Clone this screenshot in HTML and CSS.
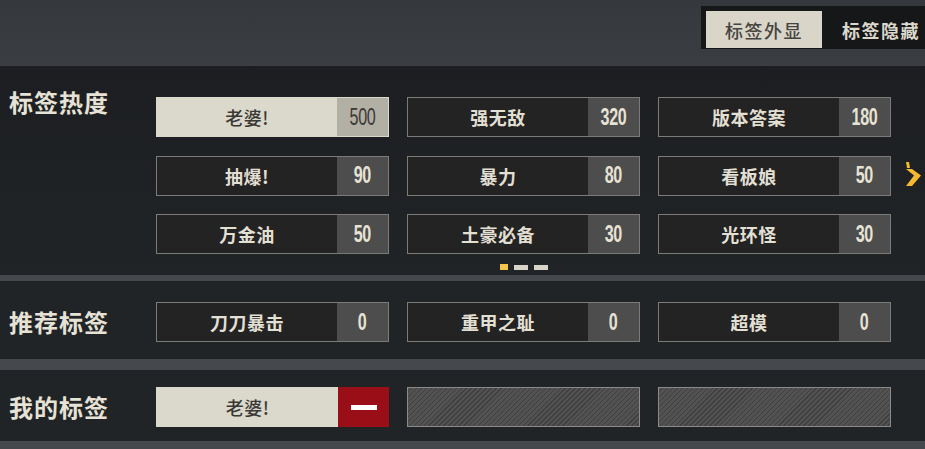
FILE: index.html
```html
<!DOCTYPE html>
<html lang="zh">
<head>
<meta charset="utf-8">
<link rel="stylesheet" href="styles.css">
</head>
<body>
<div class="page">
  <div class="top">
    <div class="toggle">
      <div class="tab tab-on">标签外显</div>
      <div class="tab tab-off">标签隐藏</div>
    </div>
  </div>

  <section class="sec sec-hot">
    <div class="label">标签热度</div>
    <div class="gridwrap">
      <div class="grid">
        <div class="card card-on"><span class="name">老婆!</span><span class="num"><i>500</i></span></div>
        <div class="card"><span class="name">强无敌</span><span class="num"><i>320</i></span></div>
        <div class="card"><span class="name">版本答案</span><span class="num"><i>180</i></span></div>
        <div class="card"><span class="name">抽爆!</span><span class="num"><i>90</i></span></div>
        <div class="card"><span class="name">暴力</span><span class="num"><i>80</i></span></div>
        <div class="card"><span class="name">看板娘</span><span class="num"><i>50</i></span></div>
        <div class="card"><span class="name">万金油</span><span class="num"><i>50</i></span></div>
        <div class="card"><span class="name">土豪必备</span><span class="num"><i>30</i></span></div>
        <div class="card"><span class="name">光环怪</span><span class="num"><i>30</i></span></div>
      </div>
      <div class="dots"><span class="dot dot-on"></span><span class="dot"></span><span class="dot"></span></div>
    </div>
    <div class="arrow">
      <svg width="17" height="27" viewBox="0 0 17 27"><polygon points="1,1 4,1 5,7 2,7" fill="#f5b830"/><polygon points="1,8 7,8 16,14.5 7,25 1,25 9,14.5" fill="#f5b830"/></svg>
    </div>
  </section>
  <div class="band band-a"></div>

  <section class="sec sec-rec">
    <div class="label">推荐标签</div>
    <div class="grid">
      <div class="card"><span class="name">刀刀暴击</span><span class="num"><i>0</i></span></div>
      <div class="card"><span class="name">重甲之耻</span><span class="num"><i>0</i></span></div>
      <div class="card"><span class="name">超模</span><span class="num"><i>0</i></span></div>
    </div>
  </section>
  <div class="band band-b"></div>

  <section class="sec sec-mine">
    <div class="label">我的标签</div>
    <div class="grid">
      <div class="card card-on"><span class="name">老婆!</span><span class="minus"><span class="bar"></span></span></div>
      <div class="card card-empty"></div>
      <div class="card card-empty"></div>
    </div>
  </section>
  <div class="band band-c"></div>
</div>
</body>
</html>
```

FILE: styles.css
```css
* { box-sizing: border-box; }
html, body { margin: 0; padding: 0; }
body {
  width: 925px;
  height: 449px;
  overflow: hidden;
  background: #212427;
  font-family: "Noto Sans CJK SC", "Noto Sans", sans-serif;
}
.page { width: 925px; }

.top {
  height: 66px;
  background: linear-gradient(#35383d, #3a3d42);
  display: flex;
  justify-content: flex-end;
  align-items: flex-start;
  padding-top: 6px;
}
.toggle {
  background: #161718;
  height: 43px;
  width: 224px;
  display: flex;
  padding: 5px 0 1px 5px;
}
.tab {
  height: 37px;
  display: flex;
  align-items: center;
  font-size: 18px;
  line-height: 1;
  letter-spacing: 1.5px;
}
.tab-on {
  width: 116px;
  background: #d9d5c9;
  color: #46443f;
  justify-content: center;
  font-weight: 500;
}
.tab-off {
  flex: 1;
  color: #dcd8cc;
  font-weight: 700;
  padding-left: 20px;
}

.sec {
  display: flex;
  align-items: flex-start;
}
.label {
  width: 156px;
  padding-left: 9px;
  font-size: 24px;
  font-weight: 700;
  letter-spacing: 1px;
  color: #e6e2d6;
  line-height: 1;
}
.sec-hot {
  height: 209px;
  background: linear-gradient(#1c1e21, #212427);
  padding-top: 31px;
}
.sec-hot .label { margin-top: -7px; }
.sec-rec {
  height: 78px;
  padding-top: 21px;
  background: #212427;
}
.sec-rec .label { margin-top: 8px; }
.sec-mine {
  height: 71px;
  padding-top: 17px;
  background: #212427;
}
.sec-mine .label { margin-top: 8px; }

.band { background: #45494d; }
.band-a { height: 6px; }
.band-b { height: 11px; }
.band-c { height: 8px; }

.gridwrap { display: flex; flex-direction: column; }
.grid {
  display: grid;
  grid-template-columns: repeat(3, 233px);
  column-gap: 18px;
  row-gap: 18.5px;
}
.card {
  height: 40px;
  display: flex;
  border: 1px solid #7b7b78;
  background: #232323;
}
.name {
  flex: 1;
  display: flex;
  align-items: center;
  justify-content: center;
  font-size: 18px;
  font-weight: 700;
  color: #e2dfd3;
  letter-spacing: 0.5px;
}
.num {
  width: 51px;
  background: #4d4d4d;
  display: flex;
  align-items: center;
  justify-content: center;
  font-family: "Liberation Sans", Arial, sans-serif;
  font-size: 23px;
  font-weight: 700;
  color: #e6e2d4;
}
.num i {
  font-style: normal;
  display: inline-block;
  transform: scaleX(0.7);
  letter-spacing: -0.5px;
  line-height: 1;
}
.card-on {
  background: #dbd8cc;
  border-color: #dbd8cc;
}
.card-on .name {
  color: #3a3935;
  font-weight: 500;
}
.card-on .num {
  background: #b2afa4;
  color: #3b3a36;
  font-weight: 400;
}
.minus {
  width: 51px;
  margin: -1px -1px -1px 0;
  background: #9a0f17;
  display: flex;
  align-items: center;
  justify-content: center;
}
.bar {
  width: 26px;
  height: 5px;
  background: #ffffff;
}
.card-empty {
  border-color: #8a8a88;
  background: repeating-linear-gradient(135deg, #525252 0 2.5px, #3f3f3f 2.5px 3.5px);
}

.dots {
  display: flex;
  justify-content: center;
  gap: 6px;
  margin-top: 10px;
  align-items: center;
}
.dot {
  width: 14px;
  height: 5px;
  background: #d8d4c8;
}
.dot-on {
  width: 8px;
  height: 6px;
  background: #f5c44a;
}
.arrow {
  margin-left: 14px;
  margin-top: 64px;
  height: 27px;
}
.arrow svg { display: block; }
```
